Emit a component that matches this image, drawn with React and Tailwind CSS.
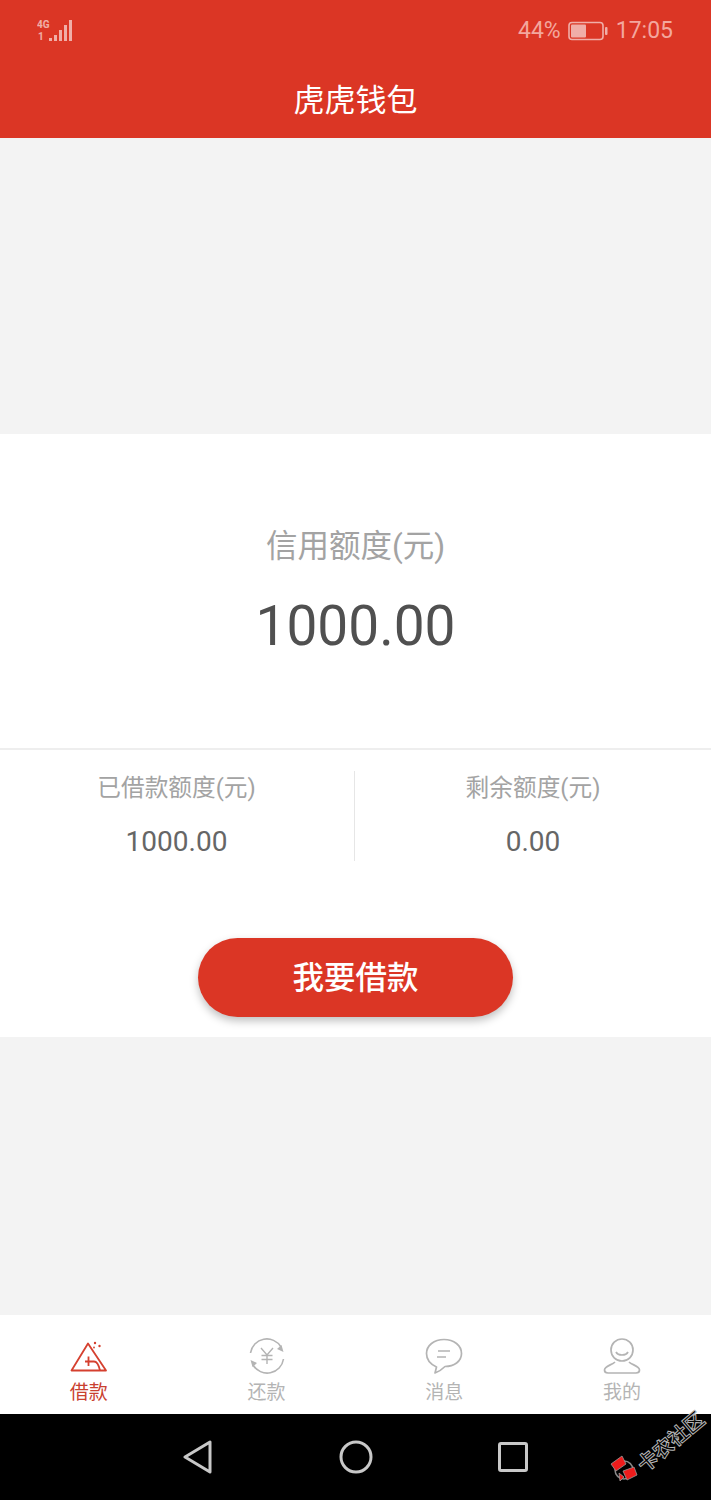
const CJK = `font-['Roboto','Noto_Sans_CJK_SC',sans-serif]`;

function SignalIcon() {
  return (
    <svg width="38" height="26" viewBox="0 0 38 26" className="opacity-60">
      <text x="1" y="10" fontSize="10" fontWeight="700" fill="#fff" fontFamily="Roboto">4G</text>
      <text x="2" y="22" fontSize="10" fontWeight="700" fill="#fff" fontFamily="Roboto">1</text>
      <g fill="#fff">
        <rect x="13" y="20" width="3" height="3" />
        <rect x="18" y="17" width="3" height="6" />
        <rect x="23" y="12" width="3" height="11" />
        <rect x="28" y="7" width="3" height="16" />
        <rect x="33" y="2" width="3" height="21" />
      </g>
    </svg>
  );
}

function BatteryIcon() {
  return (
    <svg width="40" height="20" viewBox="0 0 40 20" className="opacity-60">
      <rect x="1" y="1.5" width="34" height="17" rx="3" fill="none" stroke="#fff" strokeWidth="1.6" />
      <rect x="3" y="3.5" width="15" height="13" rx="1" fill="#fff" />
      <rect x="37" y="6" width="2.5" height="8" rx="1" fill="#fff" />
    </svg>
  );
}

function LoanIcon() {
  return (
    <svg width="38" height="34" viewBox="0 0 38 34" fill="none" stroke="#d5402f" strokeWidth="1.8">
      <path d="M18 4.5 L1.5 31.5 H36 L18 4.5 Z" strokeLinejoin="round" />
      <path d="M15 22.5 H24 C27 22.5 29 27 30 31.5" />
      <path d="M18.5 17.5 V27" />
      <circle cx="25" cy="4" r="1.2" fill="#d5402f" stroke="none" />
      <circle cx="29.5" cy="7" r="1.2" fill="#d5402f" stroke="none" />
      <circle cx="24" cy="8.5" r="0.9" fill="#d5402f" stroke="none" />
    </svg>
  );
}

function RepayIcon() {
  return (
    <svg width="38" height="36" viewBox="0 0 38 36" fill="none" stroke="#b4b4b4" strokeWidth="1.6">
      <path d="M2.5 15 A16.5 16.5 0 0 1 33 9" />
      <path d="M35.5 21 A16.5 16.5 0 0 1 5 27" />
      <path d="M35.5 14 L33.5 7 L29 11 Z" fill="#b4b4b4" stroke="none" />
      <path d="M2.5 22 L4.5 29 L9 25 Z" fill="#b4b4b4" stroke="none" />
      <path d="M13 10 L19 17 L25 10 M19 17 V26 M13.5 17.5 H24.5 M13.5 21.5 H24.5" strokeWidth="1.4" />
    </svg>
  );
}

function MessageIcon() {
  return (
    <svg width="38" height="36" viewBox="0 0 38 36" fill="none" stroke="#b4b4b4" strokeWidth="1.7">
      <path d="M10 35 L11.5 29 C5 26 1.5 21 1.5 15.5 C1.5 7.5 9 1.5 19 1.5 C29 1.5 36.5 7.5 36.5 15.5 C36.5 23.5 29 28.5 20 28.5 C17 31.5 13 34 10 35 Z" strokeLinejoin="round" />
      <path d="M13 13 H25 M12 19 H21" />
    </svg>
  );
}

function UserIcon() {
  return (
    <svg width="38" height="36" viewBox="0 0 38 36" fill="none" stroke="#b4b4b4" strokeWidth="1.7">
      <circle cx="19" cy="12" r="11" />
      <path d="M13 14 C15 18 23 18 25 14" />
      <path d="M12 24 C9 27 1.5 28 1.5 32 C1.5 34 3 35 5 35 H33 C35 35 36.5 34 36.5 32 C36.5 28 29 27 26 24" />
    </svg>
  );
}

function NavTab({ icon, label, active }) {
  return (
    <div className="flex-1 flex flex-col items-center pt-[23px]">
      <div className="h-[36px] flex items-center justify-center">{icon}</div>
      <span className={`text-[19px] leading-[24px] mt-[7px] ${active ? 'text-[#c9402f]' : 'text-[#b4b4b4]'}`}>{label}</span>
    </div>
  );
}

export default function App() {
  return (
    <div className={`relative w-[711px] h-[1500px] flex flex-col bg-[#f3f3f3] overflow-hidden ${CJK}`}>
      {/* header */}
      <div className="h-[138px] bg-[#db3625] flex flex-col">
        <div className="h-[62px] flex items-center justify-between pl-[36px] pr-[38px]">
          <SignalIcon />
          <div className="flex items-center gap-[7px] text-[23px] text-[#f3a79e]">
            <span>44%</span>
            <BatteryIcon />
            <span className="ml-[1px]">17:05</span>
          </div>
        </div>
        <div className="text-center text-white text-[31px] leading-[40px] mt-[19px]">虎虎钱包</div>
      </div>

      <div className="h-[296px]" />

      {/* credit card */}
      <div className="h-[603px] bg-white flex flex-col">
        <div className="h-[316px] border-b-2 border-[#eeeeee] flex flex-col items-center">
          <div className="mt-[91px] text-[31.5px] leading-[44px] text-[#a3a3a3]">信用额度(元)</div>
          <div className="mt-[21px] text-[55px] leading-[72px] text-[#505050]">1000.00</div>
        </div>
        <div className="flex mt-[21px] h-[90px]">
          <div className="w-[355px] pr-[1px] flex flex-col items-center border-r border-[#e6e6e6]">
            <div className="text-[23.7px] leading-[34px] text-[#a3a3a3]">已借款额度(元)</div>
            <div className="mt-[19px] text-[28px] leading-[36px] text-[#666666]">1000.00</div>
          </div>
          <div className="flex-1 flex flex-col items-center">
            <div className="text-[23.7px] leading-[34px] text-[#a3a3a3]">剩余额度(元)</div>
            <div className="mt-[19px] text-[28px] leading-[36px] text-[#666666]">0.00</div>
          </div>
        </div>
        <div className="flex justify-center mt-[77px]">
          <button className="w-[315px] h-[79px] pt-[3px] rounded-full bg-[#db3625] text-white text-[31.5px] font-medium shadow-[0_4px_8px_rgba(0,0,0,0.25)]">
            我要借款
          </button>
        </div>
      </div>

      <div className="flex-1" />

      {/* tab bar */}
      <div className="h-[99px] bg-white flex px-0">
        <NavTab icon={<LoanIcon />} label="借款" active />
        <NavTab icon={<RepayIcon />} label="还款" />
        <NavTab icon={<MessageIcon />} label="消息" />
        <NavTab icon={<UserIcon />} label="我的" />
      </div>

      {/* android nav */}
      <div className="h-[86px] bg-black flex items-center justify-center gap-[127px] pr-[2px]">
        <svg width="30" height="34" viewBox="0 0 30 34" fill="none" stroke="#c8c8c8" strokeWidth="3" strokeLinejoin="round">
          <path d="M3 17 L28 2 V32 Z" />
        </svg>
        <svg width="34" height="34" viewBox="0 0 34 34" fill="none" stroke="#c8c8c8" strokeWidth="3">
          <circle cx="17" cy="17" r="15" />
        </svg>
        <svg width="30" height="30" viewBox="0 0 30 30" fill="none" stroke="#c8c8c8" strokeWidth="3" strokeLinejoin="round" className="-ml-[2px]">
          <rect x="1.5" y="1.5" width="27" height="27" rx="1.5" />
        </svg>
      </div>

      {/* watermark */}
      <div className="absolute left-[610px] top-[1455px]">
        <svg width="28" height="28" viewBox="0 0 28 28">
          <circle cx="14" cy="15" r="9" fill="none" stroke="#888" strokeWidth="1.5" />
          <path d="M1 9 L12 1 L16 9 L6 16 Z" fill="#ee1c1c" stroke="#999" strokeWidth="0.8" />
          <path d="M13 16 L24 12 L27 20 L17 25 Z" fill="#ee1c1c" stroke="#999" strokeWidth="0.8" />
          <path d="M9 18 L14 22 L10 26 Z" fill="#ee1c1c" stroke="#999" strokeWidth="0.8" />
        </svg>
      </div>
      <div className="absolute left-[631px] top-[1428px] text-[20px] leading-[28px] font-bold text-black [-webkit-text-stroke:1px_#b5b5b5] origin-center rotate-[-40deg] whitespace-nowrap">
        卡农社区
      </div>
    </div>
  );
}
